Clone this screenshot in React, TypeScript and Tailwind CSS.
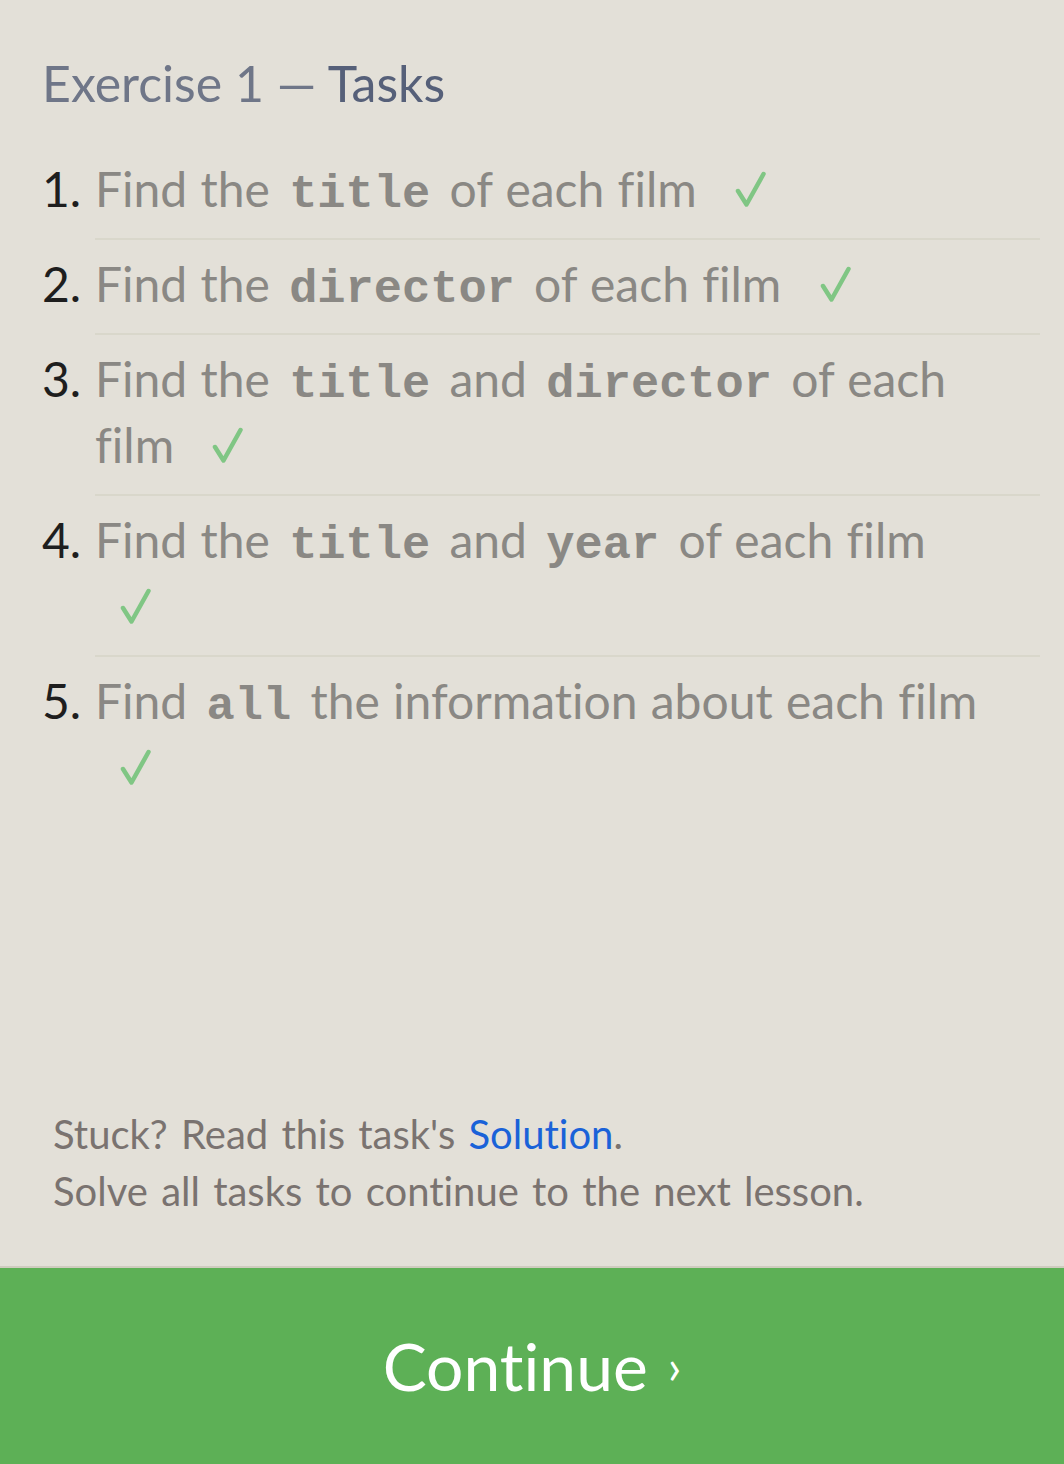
import React from "react";

type Part = string | { code: string };

const tasks: Part[][] = [
  ["Find the", { code: "title" }, "of each film"],
  ["Find the", { code: "director" }, "of each film"],
  ["Find the", { code: "title" }, "and", { code: "director" }, "of each film"],
  ["Find the", { code: "title" }, "and", { code: "year" }, "of each film"],
  ["Find", { code: "all" }, "the information about each film"],
];

function Check() {
  return (
    <svg
      className="inline-block align-baseline ml-[25px]"
      width="31"
      height="36"
      viewBox="0 0 31 36"
      fill="none"
    >
      <path
        d="M3 20 L11.5 33.5 L28.5 3"
        stroke="#80c684"
        strokeWidth="4.5"
        strokeLinecap="round"
        strokeLinejoin="round"
      />
    </svg>
  );
}

export default function App() {
  return (
    <div className="min-h-[1464px] bg-[#e3e0d8] flex flex-col font-['Lato',sans-serif] [font-variant-ligatures:none]">
      {/* heading + task list */}
      <div className="pl-[42px] pr-[24px] pt-[53px]">
        <h1 className="text-[50px] leading-[60px] text-[#6f7688]">
          Exercise 1 — <span className="text-[#566079]">Tasks</span>
        </h1>

        <ol className="mt-[32px]">
          {tasks.map((parts, i) => (
            <li key={i} className="flex text-[48px] leading-[66px]">
              <span className="w-[53px] shrink-0 pt-[11px] text-[#1e1e1e]">
                {i + 1}.
              </span>
              <div
                className={
                  "flex-1 " +
                  (i < tasks.length - 1 ? "border-b-2 border-[#d9d7cb]" : "")
                }
              >
                <p className="pt-[11px] pb-[16px] pr-[56px] text-[#8a8884] [word-spacing:1px]">
                  {parts.map((p, j) =>
                    typeof p === "string" ? (
                      <span key={j}>
                        {j > 0 ? " " : ""}
                        {p}
                      </span>
                    ) : (
                      <span key={j}>
                        {j > 0 ? " " : ""}
                        <code className="font-['Liberation_Mono',monospace] font-bold text-[47px] leading-none mx-[6px] text-[#8a8884]">
                          {p.code}
                        </code>
                      </span>
                    )
                  )}{" "}
                  <Check />
                </p>
              </div>
            </li>
          ))}
        </ol>
      </div>

      {/* footer hint */}
      <div className="mt-auto px-[53px] pb-[46px] text-[40px] leading-[57px] text-[#7a7370] [word-spacing:3px]">
        <p>
          Stuck? Read this task's{" "}
          <a href="#" className="text-[#1a62d8]">
            Solution
          </a>
          .
        </p>
        <p>Solve all tasks to continue to the next lesson.</p>
      </div>

      <button className="h-[198px] w-full bg-[#5db056] border-t-2 border-[#cfccbf] flex items-center justify-center text-white text-[66px] leading-none">
        Continue <span className="ml-[20px] text-[48px]">›</span>
      </button>
    </div>
  );
}
